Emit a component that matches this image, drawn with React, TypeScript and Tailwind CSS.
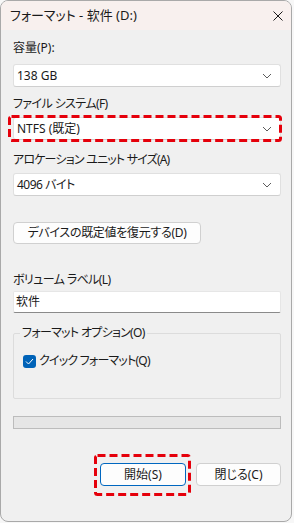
import React from "react";

const font = {
  fontFamily:
    '"Segoe UI", "Noto Sans", "Noto Sans CJK JP", sans-serif',
};

// Dashed red annotation box drawn over a control
const RedBox: React.FC<{ className: string }> = ({ className }) => (
  <svg
    className={`pointer-events-none absolute ${className}`}
    width="100%"
    height="100%"
    preserveAspectRatio="none"
  >
    <rect
      x="1.5"
      y="1.5"
      width="calc(100% - 3px)"
      height="calc(100% - 3px)"
      fill="none"
      stroke="#e5000b"
      strokeWidth="3"
      strokeDasharray="8 4"
      rx="2"
    />
  </svg>
);

const Chevron = () => (
  <svg width="10" height="6" viewBox="0 0 10 6" className="shrink-0">
    <path d="M1 1 L5 5 L9 1" fill="none" stroke="#5c5c5c" strokeWidth="1" />
  </svg>
);

const Select: React.FC<{ value: string; tight?: boolean }> = ({ value, tight }) => (
  <div className="flex h-[23px] items-center justify-between rounded-[3px] border border-[#e0e0e0] border-b-[#cfcfcf] bg-white pl-[3px] pr-[8px] text-[12px] text-[#1a1a1a]">
    <span className={tight ? "tracking-[-0.5px]" : ""}>{value}</span>
    <Chevron />
  </div>
);

const Label: React.FC<{ text: string; className?: string }> = ({
  text,
  className = "",
}) => (
  <div className={`h-[16px] text-[12px] leading-[16px] text-[#1a1a1a] ${className}`}>
    {text}
  </div>
);

export default function App() {
  return (
    <div
      className="h-[523px] w-[294px] bg-[#f7f7f7] [font-feature-settings:'palt']"
      style={font}
    >
      <div className="flex h-[522px] w-[292px] flex-col overflow-hidden rounded-[8px] border border-[#a9a9a9] bg-[#f0f0f0]">
        {/* Title bar */}
        <div className="flex h-[29px] shrink-0 items-center justify-between bg-[#f8f0ee] pl-[9px] pr-[8px]">
          <span className="text-[13px] text-[#1a1a1a]">フォーマット - 软件 (D:)</span>
          <svg width="10" height="10" viewBox="0 0 10 10">
            <path d="M0.5 0.5 L9.5 9.5 M9.5 0.5 L0.5 9.5" stroke="#1a1a1a" strokeWidth="1" />
          </svg>
        </div>

        {/* Body */}
        <div className="flex flex-col pl-[12px] pr-[10px] pt-[10px]">
          <Label text="容量(P):" />
          <div className="mt-[8px]">
            <Select value="138 GB" />
          </div>

          <Label text="ファイル システム(F)" className="mt-[9px] tracking-[-0.6px]" />
          <div className="relative mt-[5px]">
            <Select value="NTFS (既定)" />
            <RedBox className="-left-[5px] -top-[2px] h-[27px] w-[274px]" />
          </div>

          <Label
            text="アロケーション ユニット サイズ(A)"
            className="mt-[12px] tracking-[-0.8px]"
          />
          <div className="mt-[5px]">
            <Select value="4096 バイト" tight />
          </div>

          <button className="mt-[26px] flex h-[22px] w-[188px] items-center justify-center rounded-[4px] border border-[#d0d0d0] bg-[#fdfdfd] text-[12px] tracking-[-0.3px] text-[#1a1a1a]">
            デバイスの既定値を復元する(D)
          </button>

          <Label text="ボリューム ラベル(L)" className="mt-[28px] tracking-[-0.6px]" />
          <div className="mt-[3px] flex h-[22px] items-center rounded-[2px] border border-[#e6e6e6] border-b-[#8a8a8a] bg-white pl-[2px] text-[12px] text-[#1a1a1a]">
            软件
          </div>

          <fieldset className="mt-[12px] rounded-[2px] border border-[#dcdcdc] pb-[29px] pl-[9px]">
            <legend className="-ml-[3px] px-[2px] text-[12px] leading-[16px] tracking-[-0.7px] text-[#1a1a1a]">
              フォーマット オプション(O)
            </legend>
            <div className="mt-[12px] flex h-[16px] items-center gap-[3px] text-[12px] text-[#1a1a1a]">
              <span className="flex h-[13px] w-[13px] items-center justify-center rounded-[3px] bg-[#0063b8]">
                <svg width="9" height="7" viewBox="0 0 9 7">
                  <path d="M1 3.5 L3.5 6 L8 1" fill="none" stroke="white" strokeWidth="1" />
                </svg>
              </span>
              <span className="tracking-[-0.8px]">クイック フォーマット(Q)</span>
            </div>
          </fieldset>

          <div className="mt-[17px] h-[13px] border border-[#bcbcbc] bg-[#e6e6e6]" />

          <div className="mt-[34px] flex justify-end gap-[10px]">
            <div className="relative">
              <button className="flex h-[23px] w-[86px] items-center justify-center rounded-[4px] border border-[#0067c0] bg-[#fdfdfd] text-[12px] text-[#1a1a1a]">
                開始(S)
              </button>
              <RedBox className="-left-[6px] -top-[9px] h-[42px] w-[97px]" />
            </div>
            <button className="flex h-[23px] w-[85px] items-center justify-center rounded-[4px] border border-[#d0d0d0] bg-[#fdfdfd] text-[12px] text-[#1a1a1a]">
              閉じる(C)
            </button>
          </div>
        </div>
      </div>
    </div>
  );
}
